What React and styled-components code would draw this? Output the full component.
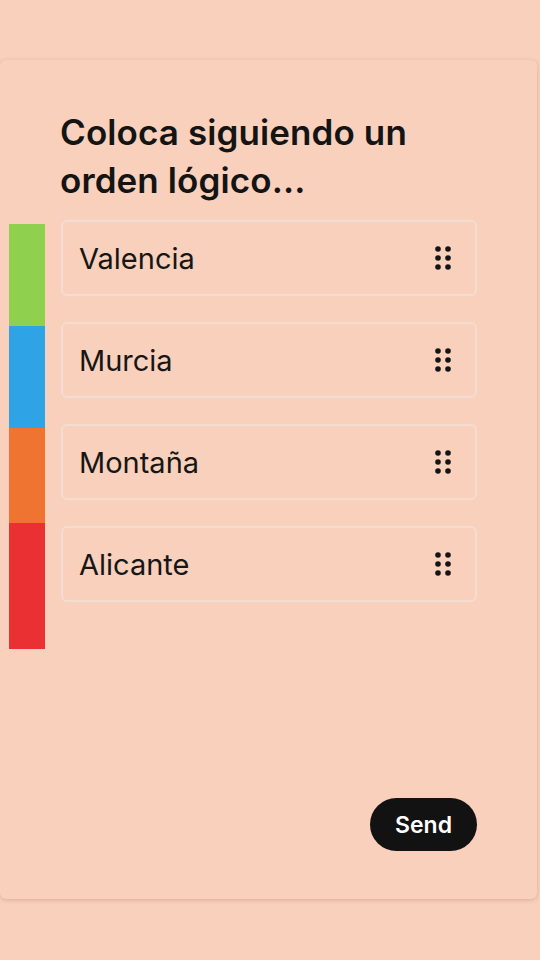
import React from 'react';
import styled, { createGlobalStyle } from 'styled-components';

const GlobalStyle = createGlobalStyle`
	html, body {
		margin: 0;
		padding: 0;
		background: #f8d0bb;
		font-family: Inter, "Liberation Sans", sans-serif;
	}
`;

const Page = styled.div`
	padding: 60px 3px 61px 0;
	min-height: 960px;
	box-sizing: border-box;
`;

const Card = styled.div`
	display: flex;
	flex-direction: column;
	height: 839px;
	box-sizing: border-box;
	padding: 48px 60px 48px 0;
	background: #f8d0bb;
	border-radius: 6px;
	box-shadow: 0 1px 4px rgba(120, 70, 50, 0.25);
`;

const Title = styled.h1`
	margin: 0 0 16px 60px;
	font-size: 35px;
	line-height: 48px;
	font-weight: 600;
	color: #141414;
	letter-spacing: 0.1px;
`;

const Body = styled.div`
	display: flex;
	align-items: flex-start;
`;

const ColorBar = styled.div`
	display: flex;
	flex-direction: column;
	width: 36px;
	margin: 4px 16px 0 9px;
`;

const Segment = styled.div`
	height: ${({ size }) => size}px;
	background: ${({ color }) => color};
`;

const List = styled.ul`
	flex: 1;
	display: flex;
	flex-direction: column;
	gap: 26px;
	margin: 0;
	padding: 0;
	list-style: none;
`;

const Item = styled.li`
	display: flex;
	align-items: center;
	justify-content: space-between;
	height: 76px;
	box-sizing: border-box;
	padding: 0 24px 0 16px;
	border: 2px solid #f3dcd2;
	border-radius: 6px;
	font-size: 29px;
	color: #161616;
`;

const Spacer = styled.div`
	flex: 1;
`;

const Footer = styled.div`
	display: flex;
	justify-content: flex-end;
`;

const SendButton = styled.button`
	height: 53px;
	padding: 0 25px;
	border: none;
	border-radius: 27px;
	background: #121212;
	color: #fff;
	font-family: inherit;
	font-size: 23px;
	font-weight: 600;
	cursor: pointer;
`;

const Handle = () => (
	<svg width="16" height="24" viewBox="0 0 16 24">
		{[3, 12, 21].map(y => [3, 13].map(x => (
			<circle key={`${x}-${y}`} cx={x} cy={y} r="2.8" fill="#141414" />
		)))}
	</svg>
);

const segments = [
	{ color: '#8fd14f', size: 102 },
	{ color: '#2ea4e6', size: 102 },
	{ color: '#f07431', size: 95 },
	{ color: '#ea3032', size: 126 },
];

const items = ['Valencia', 'Murcia', 'Montaña', 'Alicante'];

export default function App() {
	return (
		<Page>
			<GlobalStyle />
			<Card>
				<Title>Coloca siguiendo un<br />orden lógico...</Title>
				<Body>
					<ColorBar>
						{segments.map(seg => (
							<Segment key={seg.color} color={seg.color} size={seg.size} />
						))}
					</ColorBar>
					<List>
						{items.map(item => (
							<Item key={item}>
								{item}
								<Handle />
							</Item>
						))}
					</List>
				</Body>
				<Spacer />
				<Footer>
					<SendButton>Send</SendButton>
				</Footer>
			</Card>
		</Page>
	);
}
